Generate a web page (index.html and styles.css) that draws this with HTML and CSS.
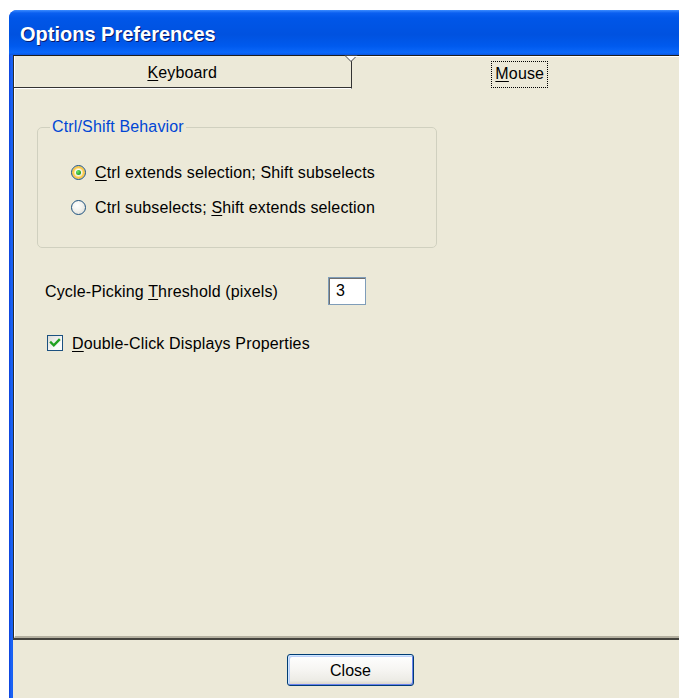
FILE: index.html
```html
<!DOCTYPE html>
<html>
<head>
<meta charset="utf-8">
<title>Options Preferences</title>
<link rel="stylesheet" href="styles.css">
</head>
<body>
<div class="window">
  <div class="titlebar"><span class="title">Options Preferences</span></div>
  <div class="client">
    <div class="tabctl">
      <div class="tabs">
        <div class="tab tab-back">
          <span><u>K</u>eyboard</span>
          <svg class="notch" width="14" height="8" viewBox="0 0 14 8"><path d="M1 0.5 L13 0.5 L7 6.5 Z" fill="#fff" stroke="#444" stroke-width="1"/></svg>
        </div>
        <div class="tab tab-front"><span class="focus"><u>M</u>ouse</span></div>
      </div>
      <div class="page">
        <div class="group">
          <span class="group-label">Ctrl/Shift Behavior</span>
          <label class="opt"><span class="radio on"></span><span><u>C</u>trl extends selection; Shift subselects</span></label>
          <label class="opt"><span class="radio"></span><span>Ctrl subselects; <u>S</u>hift extends selection</span></label>
        </div>
        <div class="field-row">
          <span class="field-label">Cycle-Picking <u>T</u>hreshold (pixels)</span>
          <span class="textbox">3</span>
        </div>
        <label class="check-row">
          <span class="checkbox"><svg width="14" height="14" viewBox="0 0 14 14"><path d="M3 6.5 L5.8 9.3 L11 4" fill="none" stroke="#21a121" stroke-width="2.4" stroke-linecap="square"/></svg></span>
          <span><u>D</u>ouble-Click Displays Properties</span>
        </label>
      </div>
    </div>
    <div class="footer">
      <button class="btn">Close</button>
    </div>
  </div>
</div>
</body>
</html>
```
FILE: styles.css
```css
html, body {
  margin: 0;
  padding: 0;
  background: #fff;
  overflow: hidden;
  width: 679px;
  height: 698px;
}

body {
  font-family: "Liberation Sans", Arial, sans-serif;
  font-size: 16px;
  letter-spacing: 0.15px;
  color: #000;
}

u { text-decoration: underline; text-underline-offset: 2px; }

/* window frame */
.window {
  margin: 10px 0 0 9px;
  width: 683px;
  height: 700px;
  border-top-left-radius: 8px;
  border-top-right-radius: 8px;
  overflow: hidden;
  background: linear-gradient(to right, #0a3fd9 0, #1b62f5 2px, #1660f0 4px);
  display: flex;
  flex-direction: column;
}

.titlebar {
  height: 45px;
  flex: none;
  background: linear-gradient(#3c8cff 0, #0a5ff0 3px, #0056e8 8px, #0052e0 55%, #005aee 80%, #0b68fa 95%, #0a55e0 100%);
  display: flex;
  align-items: center;
  padding-left: 11px;
}

.title {
  font-family: "Liberation Sans", Arial, sans-serif;
  font-weight: bold;
  font-size: 20px;
  letter-spacing: 0;
  color: #fff;
  text-shadow: 1px 1px 0 #0a1a6a;
  margin-top: 4px;
}

.client {
  margin: 0 4px;
  flex: 1;
  background: #ece9d8;
  display: flex;
  flex-direction: column;
}

/* tab control */
.tabctl {
  border-left: 1px solid #2e2e2a;
  border-top: 1px solid #1e1e1c;
}

.tabs {
  display: flex;
  height: 33px;
}

.tab {
  flex: 1;
  display: flex;
  align-items: center;
  justify-content: center;
  box-sizing: border-box;
  position: relative;
  padding-top: 2px;
}

.tab-back {
  border-right: 1px solid #333;
  border-bottom: 1px solid #fff;
  box-shadow: inset 0 -1px 0 #333, inset 1px 0 0 #fff;
}

.notch {
  position: absolute;
  top: -1px;
  right: -7px;
}

.tab-front {
  border-top: 1px solid #fff;
}

.focus {
  border: 1px dotted #000;
  padding: 3px 3px 4px;
  line-height: 18px;
}

.page {
  height: 549px;
  border-left: 1px solid #fff;
  border-bottom: 2px solid #b4b0a0;
  padding: 38px 0 0 22px;
  box-sizing: border-box;
  display: flex;
  flex-direction: column;
  align-items: flex-start;
}

/* group box */
.group {
  position: relative;
  width: 400px;
  box-sizing: border-box;
  border: 1px solid #d0d0bf;
  border-radius: 5px;
  padding: 27px 0 22px 33px;
}

.group-label {
  position: absolute;
  top: -10px;
  left: 12px;
  padding: 0 2px;
  line-height: 18px;
  background: #ece9d8;
  color: #0046d5;
}

.opt {
  display: flex;
  align-items: center;
  height: 35px;
  gap: 9px;
}

.radio {
  width: 15px;
  height: 15px;
  box-sizing: border-box;
  border-radius: 50%;
  border: 1px solid #1c5180;
  background: radial-gradient(circle at 40% 35%, #ffffff 0, #f4f4f0 40%, #d8d8d0 100%);
  position: relative;
  flex: none;
}

.radio.on {
  box-shadow: inset 0 0 0 2px #f9c94d, inset 0 0 0 3px #fbe6a2;
}

.radio.on::after {
  content: "";
  position: absolute;
  left: 4px;
  top: 4px;
  width: 5px;
  height: 5px;
  border-radius: 50%;
  background: radial-gradient(circle at 35% 35%, #6de66d, #21a121 70%);
}

/* threshold field */
.field-row {
  display: flex;
  align-items: center;
  margin-top: 29px;
  padding-left: 8px;
}

.field-label {
  width: 283px;
  padding-top: 2px;
}

.textbox {
  width: 38px;
  height: 28px;
  box-sizing: border-box;
  border: 1px solid #7f9db9;
  box-shadow: inset 1px 1px 0 #6f6f6f;
  background: #fff;
  padding-left: 7px;
  line-height: 26px;
}

/* checkbox row */
.check-row {
  display: flex;
  align-items: center;
  height: 20px;
  margin-top: 28px;
  padding-left: 10px;
  gap: 9px;
}

.check-row > span:last-child {
  padding-top: 2px;
}

.checkbox {
  width: 16px;
  height: 16px;
  box-sizing: border-box;
  border: 1px solid #1c5180;
  background: linear-gradient(135deg, #dcdcd7, #fbfbfa 70%);
  display: flex;
  align-items: center;
  justify-content: center;
}

/* dialog footer */
.footer {
  flex: 1;
  border-top: 2px solid #44433d;
  display: flex;
  justify-content: center;
  align-items: flex-start;
  padding-top: 14px;
}

.btn {
  width: 127px;
  height: 32px;
  border: 1px solid #003c74;
  border-radius: 3px;
  background: linear-gradient(#ffffff 0, #f6f5f2 50%, #ecebe5 85%, #d6d0c5 100%);
  box-shadow: inset 1px 1px 0 #cee7ff, inset -1px -1px 0 #6982ee, inset 2px 2px 0 #bccff9;
  font-family: "Liberation Sans", Arial, sans-serif;
  font-size: 16px;
  color: #000;
  padding: 2px 0 0;
}
```
